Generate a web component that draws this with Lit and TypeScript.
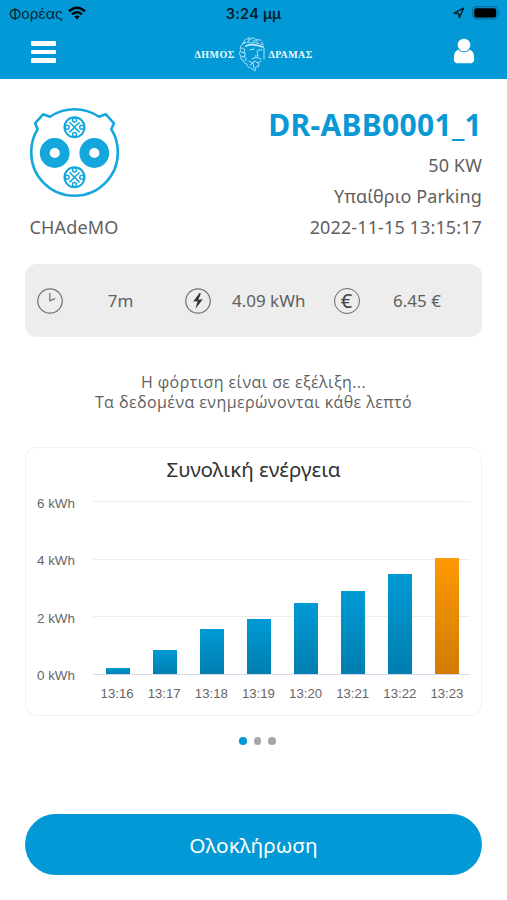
import { LitElement, html, css, svg } from "lit";
import { customElement, property } from "lit/decorators.js";
import { styleMap } from "lit/directives/style-map.js";

@customElement("status-bar")
class StatusBar extends LitElement {
  static styles = css`
    :host { display: grid; grid-template-columns: 1fr auto 1fr; height: 28px; align-items: center; color: #06202c;
      font: 14px/28px Inter, "Liberation Sans", sans-serif; }
    .carrier { display: flex; align-items: center; padding-left: 9px; gap: 6px; }
    .name { width: 53px; }
    .time { font-weight: 600; font-size: 14.5px; letter-spacing: 0.25px; }
    .right { display: flex; justify-content: flex-end; align-items: center; gap: 7px; padding-right: 6px; }
    svg { display: block; margin-bottom: 2px; }
  `;
  render() {
    return html`
      <div class="carrier"><span class="name">Φορέας</span>
        <svg width="18" height="14" viewBox="0 0 18 14" fill="none" stroke="#000" stroke-width="2.5">
          <path d="M1 5.2Q9-1.8 17 5.2M4 8.4Q9 4 14 8.4"/><path d="M6.3 10.6Q9 8.4 11.7 10.6L9 13.6Z" fill="#000" stroke="none"/>
        </svg></div>
      <span class="time">3:24 μμ</span>
      <div class="right">
        <svg width="12" height="12" viewBox="0 0 12 12"><path d="M1 6.2L10.6 1.2L6.4 10.6L5.6 6.4Z" fill="none" stroke="#06202c" stroke-width="1.5" stroke-linejoin="round"/></svg>
        <svg width="29" height="14" viewBox="0 0 29 14"><rect x=".7" y=".7" width="25" height="12.2" rx="3.6" fill="none" stroke="#05709d" stroke-width="1.2"/><rect x="2.2" y="2.2" width="22" height="9.2" rx="2" fill="#000"/><path d="M27 4.5Q28.8 6.8 27 9Z" fill="#05709d"/></svg>
      </div>`;
  }
}

@customElement("nav-bar")
class NavBar extends LitElement {
  static styles = css`
    :host { display: flex; justify-content: space-between; align-items: center; height: 51px; padding: 0 32px 0 31px; box-sizing: border-box; }
    .menu { display: flex; flex-direction: column; gap: 4px; width: 25px; margin-bottom: 3px; }
    .menu i { height: 4.4px; border-radius: 1px; background: #fff; }
    .brand { display: flex; align-items: center; color: #f0f9fd; font: 700 10px/14px "Liberation Serif", serif; margin-right: 0; }
    .left { width: 42px; letter-spacing: 0.5px; margin-top: 3px; }
    .last { width: 46px; letter-spacing: 0.5px; margin-top: 3px; }
    .face { margin: 0 3px 0 1px; }
    .user { margin-bottom: 5px; }
    svg { display: block; }
  `;
  render() {
    return html`
      <div class="menu"><i></i><i></i><i></i></div>
      <div class="brand"><span class="left">ΔΗΜΟΣ</span>
        <svg class="face" width="28" height="36" viewBox="0 0 28 36" fill="none" stroke="#c9eafa" stroke-width=".9" stroke-linecap="round">
          <path d="M7 6Q4 6 4 9Q1 11 3 14Q0 18 3 20Q2 24 5 24Q6 28 9 28Q9 32 13 32L17 35L18 31L21 30L20 27L23 25" stroke-dasharray="4 1"/>
          <path d="M5 8Q9 5 13 7Q18 6 25 9M6 5Q9 1 12 4Q16 0 18 4Q23 2 25 8" stroke-dasharray="3 1.4"/>
          <path d="M8 10Q14 7 25 11" stroke-width="1.8"/>
          <path d="M4 12Q8 12 6 16Q9 18 6 20Q9 22 8 25M3 16L6 17M4 21L7 20"/>
          <path d="M26 12V23M12 14L16 13M20 14L24 14M19 15L20 20L17 20M14 23Q18 20 23 23M11 25L14 27L17 25L20 27M12 29L15 27L16 32"/>
          <path d="M10 2L13 2M15 5L20 5M10 6L11 4" stroke-width=".8"/>
        </svg>
        <span class="last">ΔΡΑΜΑΣ</span></div>
      <svg class="user" width="22" height="26" viewBox="0 0 22 26" fill="#fff"><circle cx="11" cy="7" r="6.3"/>
        <path d="M5.3 11.8Q11 16.8 16.7 11.8Q21.2 13.2 21.2 20.4Q21.2 25.2 17.5 25.2H4.5Q.8 25.2 .8 20.4Q.8 13.2 5.3 11.8Z"/></svg>`;
  }
}

const pin = (cy: number) => svg`
  <g transform="translate(45.5 ${cy})">
    <circle r="10" stroke-width="2.1"/>
    <path d="M-4.6-4.6L4.6 4.6M4.6-4.6L-4.6 4.6" stroke-width="1.6" stroke-linecap="round"/>
    <g stroke-width="1.5"><circle cy="-7.3" r="2"/><circle cy="7.3" r="2"/><circle cx="-7.3" r="2"/><circle cx="7.3" r="2"/></g>
  </g>`;

@customElement("charge-point")
class ChargePoint extends LitElement {
  static styles = css`
    :host { display: flex; box-sizing: border-box; justify-content: space-between; padding: 28px 25px 0; height: 157px; color: #5f5f5f; font: 18px/31px "Noto Sans", "Open Sans", sans-serif; }
    .plug { display: flex; flex-direction: column; padding-left: 4px; }
    .plug svg { display: block; flex: none; margin-bottom: 14px; }
    .name { letter-spacing: 0.15px; padding-left: 0.5px; }
    .info { text-align: right; white-space: nowrap; letter-spacing: 0.12px; }
    .id { font-size: 30px; line-height: 36px; font-weight: 700; color: #0b98d6; margin-bottom: 7px; letter-spacing: 0.3px; }
  `;
  render() {
    return html`
      <div class="plug">
        <svg width="91" height="91" viewBox="0 0 91 91" fill="none" stroke="#14a7de" stroke-linejoin="round">
          <path stroke-width="2.6" d="M21 9.7Q32 2.2 45.5 2.2T70 9.7L76.7 7.2L85 16.3L82.3 22.3Q88.8 32 88.8 45.5A43.3 43.3 0 0 1 2.2 45.5Q2.2 32 8.7 22.3L6 16.3L14.3 7.2Z"/>
          ${pin(20.3)}${pin(70.3)}
          <circle cx="25.7" cy="46" r="10" stroke-width="9.8"/><circle cx="65.3" cy="46" r="10" stroke-width="9.8"/>
        </svg>
        <span class="name">CHAdeMO</span>
      </div>
      <div class="info">
        <div class="id">DR-ABB0001_1</div>
        <div>50 KW</div><div>Υπαίθριο Parking</div><div>2022-11-15 13:15:17</div>
      </div>`;
  }
}

@customElement("session-stats")
class SessionStats extends LitElement {
  static styles = css`
    :host { display: grid; grid-template-columns: repeat(3, 148.25px); height: 73px; margin: 28px 25px 0; padding-left: 12px; box-sizing: border-box;
      background: #ededed; border-radius: 12px; color: #5f5f5f; font: 17px/24px "Noto Sans", "Open Sans", sans-serif; align-items: center; }
    .cell { display: flex; align-items: center; }
    .cell svg { display: block; flex: none; }
    .value { width: 115px; text-align: center; white-space: nowrap; }
    .euro { display: grid; place-items: center; width: 26px; height: 26px; border: 1.2px solid #686868; border-radius: 50%; box-sizing: border-box; flex: none; font-size: 20px; line-height: 22px; color: #444; }
  `;
  render() {
    return html`
      <div class="cell"><svg width="26" height="26" viewBox="0 0 26 26" fill="none" stroke="#707070" stroke-width="1.2"><circle cx="13" cy="13" r="12.2"/><path d="M12.8 5V12.8L18 10.6"/></svg><span class="value">7m</span></div>
      <div class="cell"><svg width="26" height="26" viewBox="0 0 26 26" fill="none" stroke="#707070" stroke-width="1.2"><circle cx="13" cy="13" r="12.2"/><path d="M14.5 5L8.3 13.6L12.5 13.3L10.5 20.8L17.8 11.3L13.2 11.7L16 5.4Z" fill="#333" stroke="none"/></svg><span class="value">4.09 kWh</span></div>
      <div class="cell"><span class="euro">€</span><span class="value">6.45 €</span></div>`;
  }
}

interface Sample { time: string; height: number; }

@customElement("energy-chart")
class EnergyChart extends LitElement {
  static styles = css`
    :host { display: block; box-sizing: border-box; height: 269px; margin: 35px 25px 0; padding: 7px 10px 0; border: 1.5px solid #f1f1f3; border-radius: 12px;
      font: 13px/16px "Liberation Sans", sans-serif; color: #666; }
    .title { text-align: center; font: 20.6px/28px "Noto Sans", "Open Sans", sans-serif; color: #333; }
    .body { display: grid; grid-template-columns: 57px 377px; margin-top: 18px; }
    .scale { display: flex; flex-direction: column; justify-content: space-between; height: 188px; margin-top: -5px; padding-left: 1px; font-size: 13.4px; }
    .plot { display: grid; height: 174px; }
    .lines, .bars { grid-area: 1 / 1; }
    .lines { display: flex; flex-direction: column; justify-content: space-between; }
    .lines i { height: 1px; background: #ededf0; }
    .lines i:last-child { background: #d3d9ec; }
    .bars { display: grid; grid-template-columns: repeat(8, 1fr); align-items: end; justify-items: center; padding: 0 0 1px 1px; }
    .bar { width: 24px; background: linear-gradient(#009ad5, #007eaf); z-index: 1; }
    .bar.now { background: linear-gradient(#ff9900, #cf7c00); }
    .times { grid-column: 2; display: grid; grid-template-columns: repeat(8, 1fr); text-align: center; margin-top: 2px; font-size: 13.2px; }
    .times span { padding-left: 1px; }
  `;
  @property({ attribute: false }) samples: Sample[] = [];
  render() {
    const last = this.samples.length - 1;
    return html`
      <div class="title">Συνολική ενέργεια</div>
      <div class="body">
        <div class="scale">${[6, 4, 2, 0].map((n) => html`<span>${n} kWh</span>`)}</div>
        <div class="plot">
          <div class="lines"><i></i><i></i><i></i><i></i></div>
          <div class="bars">${this.samples.map((s, i) => html`<div class="bar ${i === last ? "now" : ""}" style=${styleMap({ height: `${s.height}px` })}></div>`)}</div>
        </div>
        <div class="times">${this.samples.map((s) => html`<span>${s.time}</span>`)}</div>
      </div>`;
  }
}

@customElement("app-root")
class AppRoot extends LitElement {
  static styles = css`
    :host { display: block; width: 507px; height: 900px; background: #fff; overflow: hidden; }
    .top { background: #0399d6; height: 79px; }
    .note { text-align: center; margin-top: 35px; color: #5f5f5f; font: 16px/20px "Open Sans", "Noto Sans", sans-serif; letter-spacing: 0.42px; }
    .dots { display: flex; justify-content: center; gap: 7px; margin-top: 21px; padding-left: 8px; }
    .dots i { width: 7.6px; height: 7.6px; border-radius: 50%; background: #a6a6a6; }
    .dots i.on { background: #0399d6; }
    .finish { display: block; width: 457px; height: 61px; margin: 69px 25px 0; padding: 1px 0 0; border: 0; border-radius: 31px; background: #0399d6; color: #fff;
      font: 20.8px/60px "Noto Sans", "Open Sans", sans-serif; }
  `;
  private samples: Sample[] = [
    { time: "13:16", height: 6 }, { time: "13:17", height: 24.5 }, { time: "13:18", height: 45.5 }, { time: "13:19", height: 55 },
    { time: "13:20", height: 71 }, { time: "13:21", height: 83 }, { time: "13:22", height: 100.5 }, { time: "13:23", height: 116.5 },
  ];
  render() {
    return html`
      <div class="top"><status-bar></status-bar><nav-bar></nav-bar></div>
      <charge-point></charge-point>
      <session-stats></session-stats>
      <div class="note">Η φόρτιση είναι σε εξέλιξη...<br>Τα δεδομένα ενημερώνονται κάθε λεπτό</div>
      <energy-chart .samples=${this.samples}></energy-chart>
      <div class="dots"><i class="on"></i><i></i><i></i></div>
      <button class="finish">Ολοκλήρωση</button>`;
  }
}
